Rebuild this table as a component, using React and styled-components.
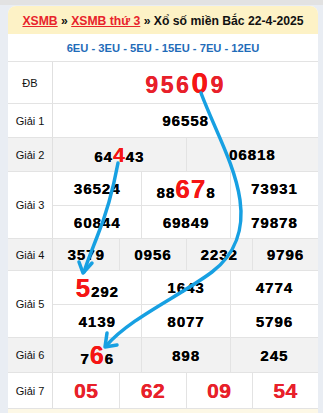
import React from 'react';
import styled, { createGlobalStyle } from 'styled-components';

const GlobalStyle = createGlobalStyle`
  body {
    margin: 0;
    background: #e9edf3;
    font-family: 'Liberation Sans', Arial, sans-serif;
  }
`;

const Page = styled.div`
  position: relative;
  width: 323px;
  height: 413px;
  overflow: hidden;
  border-top: 5px solid #e2e2e2;
  box-sizing: border-box;
`;

const Card = styled.div`
  margin: 1px 5px 0 8px;
  background: #fff;
  border-radius: 8px 8px 0 0;
  overflow: hidden;
`;

const Header = styled.div`
  height: 27px;
  background: #fdf2c6;
  display: flex;
  align-items: center;
  justify-content: center;
  font-size: 12.2px;
  font-weight: bold;
  color: #111;
  white-space: nowrap;
  padding-top: 1px;

  a {
    color: #e8232b;
    text-decoration: underline;
  }
`;

const Codes = styled.div`
  height: 27px;
  display: flex;
  align-items: center;
  justify-content: center;
  font-size: 11.2px;
  font-weight: bold;
  color: #1f6cb9;
  border-bottom: 1px solid #e3e3e3;
`;

const PrizeRow = styled.div`
  display: grid;
  grid-template-columns: 45px 1fr;
  background: ${p => (p.$shade ? '#f2f2f2' : '#fff')};
  border-bottom: 1px solid #e3e3e3;
`;

const Label = styled.div`
  display: flex;
  align-items: center;
  justify-content: center;
  font-size: 11px;
  color: #111;
  border-right: 1px solid #e0e0e0;
`;

const Cells = styled.div`
  display: grid;
  grid-template-columns: repeat(${p => p.$cols}, 1fr);
`;

const Cell = styled.div`
  height: ${p => p.$h}px;
  display: flex;
  align-items: center;
  justify-content: center;
  border-left: ${p => (p.$first ? 'none' : '1px solid #e3e3e3')};
  border-top: ${p => (p.$sub ? '1px solid #e3e3e3' : 'none')};
  box-sizing: border-box;
`;

const Num = styled.span`
  font-size: ${p => p.$size || 15}px;
  font-weight: bold;
  letter-spacing: ${p => p.$ls ?? 1}px;
  color: ${p => (p.$red ? '#e8202a' : '#000')};
  line-height: 1;
  text-shadow: 0.3px 0 0 currentColor;
`;

const Hi = styled.span`
  font-size: ${p => p.$size}px;
  color: #f51515;
`;

const Bottom = styled.div`
  height: 5px;
  background: #fdf8e6;
`;

const Overlay = styled.svg`
  position: absolute;
  top: -5px;
  left: 0;
  pointer-events: none;
`;

const Arrows = () => (
  <Overlay width="323" height="413" viewBox="0 0 323 413">
    <g fill="none" stroke="#17a0e2" strokeWidth="3.5" strokeLinecap="round" strokeLinejoin="round">
      <path d="M201,93 C215,130 235,165 240,200 C244,228 236,254 212,272 C180,296 130,318 106,346" />
      <path d="M107,333 L105,347 L117,345" />
      <path d="M118,163 C113,190 106,215 97,237 C92,250 87,262 84,272" />
      <path d="M79,262 L83,273 L92,263" />
    </g>
  </Overlay>
);

const Row = ({ label, shade, cols, h, items }) => (
  <PrizeRow $shade={shade}>
    <Label>{label}</Label>
    <Cells $cols={cols}>
      {items.map((it, i) => (
        <Cell key={i} $h={h} $first={i % cols === 0} $sub={i >= cols}>
          {it}
        </Cell>
      ))}
    </Cells>
  </PrizeRow>
);

export default function App() {
  return (
    <>
      <GlobalStyle />
      <Page>
        <Card>
          <Header>
            <a>XSMB</a>&nbsp;»&nbsp;<a>XSMB thứ 3</a>&nbsp;» Xổ số miền Bắc 22-4-2025
          </Header>
          <Codes>6EU - 3EU - 5EU - 15EU - 7EU - 12EU</Codes>
          <Row label="ĐB" cols={1} h={41} items={[
            <Num $red $size={23} $ls={2.5}>956<Hi $size={30}>0</Hi>9</Num>,
          ]} />
          <Row label="Giải 1" cols={1} h={33} items={[<Num>96558</Num>]} />
          <Row label="Giải 2" shade cols={2} h={33} items={[
            <Num>64<Hi $size={21}>4</Hi>43</Num>,
            <Num>06818</Num>,
          ]} />
          <Row label="Giải 3" cols={3} h={33} items={[
            <Num>36524</Num>,
            <Num>88<Hi $size={26}>67</Hi>8</Num>,
            <Num>73931</Num>,
            <Num>60844</Num>,
            <Num>69849</Num>,
            <Num>79878</Num>,
          ]} />
          <Row label="Giải 4" shade cols={4} h={31} items={[
            <Num>3579</Num>,
            <Num>0956</Num>,
            <Num>2232</Num>,
            <Num>9796</Num>,
          ]} />
          <Row label="Giải 5" cols={3} h={33} items={[
            <Num><Hi $size={26}>5</Hi>292</Num>,
            <Num>1643</Num>,
            <Num>4774</Num>,
            <Num>4139</Num>,
            <Num>8077</Num>,
            <Num>5796</Num>,
          ]} />
          <Row label="Giải 6" shade cols={3} h={34} items={[
            <Num>7<Hi $size={25}>6</Hi>6</Num>,
            <Num>898</Num>,
            <Num>245</Num>,
          ]} />
          <Row label="Giải 7" cols={4} h={35} items={[
            <Num $red $size={21} $ls={0.5}>05</Num>,
            <Num $red $size={21} $ls={0.5}>62</Num>,
            <Num $red $size={21} $ls={0.5}>09</Num>,
            <Num $red $size={21} $ls={0.5}>54</Num>,
          ]} />
          <Bottom />
        </Card>
        <Arrows />
      </Page>
    </>
  );
}
